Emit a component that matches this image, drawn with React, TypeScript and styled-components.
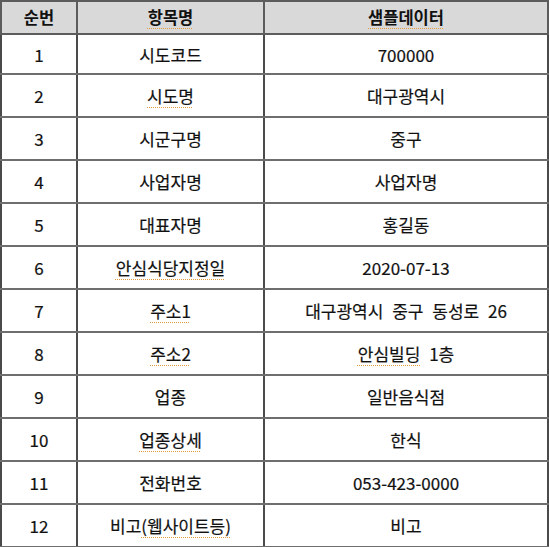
import React from 'react'
import styled, { createGlobalStyle } from 'styled-components'

const Global = createGlobalStyle`
  html, body {
    margin: 0;
    padding: 0;
    background: #ffffff;
  }
  body {
    font-family: "Noto Sans CJK KR", "Noto Sans", sans-serif;
    color: #111111;
  }
`

const Table = styled.table`
  width: 549px;
  border-collapse: collapse;
  table-layout: fixed;
  border: 2px solid #2e2e2e;
  font-size: 17px;
  word-spacing: 5px;
`

const HeadCell = styled.th`
  height: 31px;
  padding: 0;
  background: #d9d9d9;
  font-weight: 700;
  font-size: 16.5px;
  text-align: center;
  vertical-align: middle;
  border: 2px solid #5c5c5c;
  line-height: 1;
`

const Row = styled.tr<{ $h: number }>`
  height: ${(p) => p.$h}px;
`

const Cell = styled.td`
  padding: 0;
  text-align: center;
  vertical-align: middle;
  border-left: 2px solid #4a4a4a;
  border-right: 2px solid #4a4a4a;
  border-top: 2px solid #6e6e6e;
  border-bottom: 2px solid #6e6e6e;
  line-height: 1;
  font-weight: 400;
  -webkit-text-stroke: 0.2px #111;
`

const Typo = styled.span`
  text-decoration: underline dotted #e39b3c;
  text-decoration-thickness: 1px;
  text-underline-offset: 4px;
`

type Item = { no: number; name: React.ReactNode; sample: React.ReactNode }

const items: Item[] = [
  { no: 1, name: '시도코드', sample: '700000' },
  { no: 2, name: <Typo>시도명</Typo>, sample: '대구광역시' },
  { no: 3, name: '시군구명', sample: '중구' },
  { no: 4, name: '사업자명', sample: '사업자명' },
  { no: 5, name: '대표자명', sample: '홍길동' },
  { no: 6, name: <Typo>안심식당지정일</Typo>, sample: '2020-07-13' },
  { no: 7, name: <Typo>주소1</Typo>, sample: '대구광역시 중구 동성로 26' },
  { no: 8, name: <Typo>주소2</Typo>, sample: <><Typo>안심빌딩</Typo> 1층</> },
  { no: 9, name: '업종', sample: '일반음식점' },
  { no: 10, name: <Typo>업종상세</Typo>, sample: '한식' },
  { no: 11, name: '전화번호', sample: '053-423-0000' },
  { no: 12, name: <>비고<Typo>(웹사이트등)</Typo></>, sample: '비고' },
]

const App = () => {
  return (
    <>
      <Global />
      <Table>
        <colgroup>
          <col style={{ width: 76 }} />
          <col style={{ width: 187 }} />
          <col />
        </colgroup>
        <thead>
          <tr>
            <HeadCell>순번</HeadCell>
            <HeadCell><Typo>항목명</Typo></HeadCell>
            <HeadCell><Typo>샘플데이터</Typo></HeadCell>
          </tr>
        </thead>
        <tbody>
          {items.map((it) => (
            <Row key={it.no} $h={it.no === 1 ? 40 : 43}>
              <Cell>{it.no}</Cell>
              <Cell>{it.name}</Cell>
              <Cell>{it.sample}</Cell>
            </Row>
          ))}
        </tbody>
      </Table>
    </>
  )
}

export default App
